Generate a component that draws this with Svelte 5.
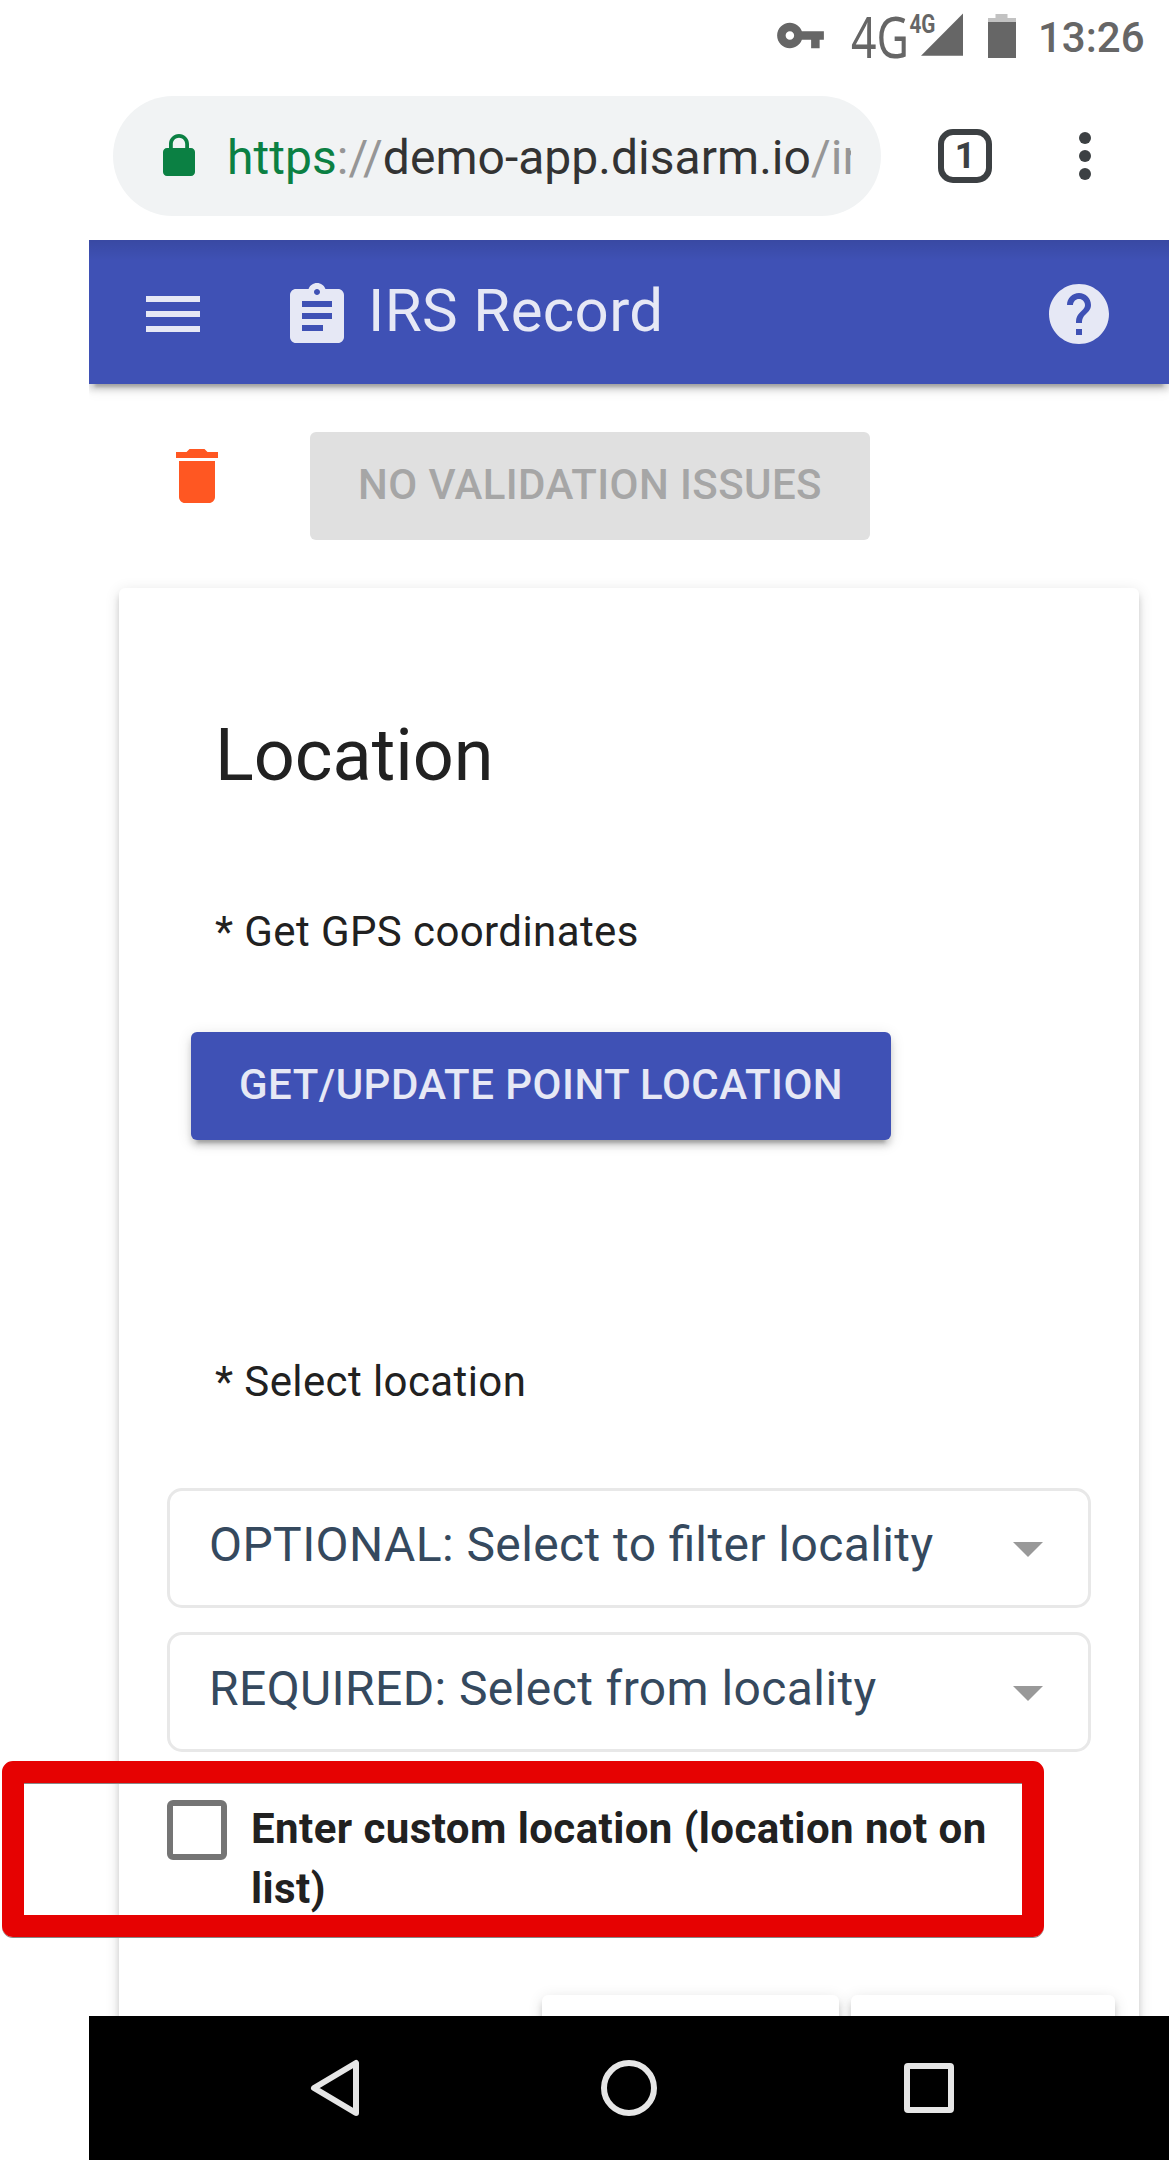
<script>
  const selects = [
    ['OPTIONAL: Select to ', 'fi', 'lter locality'],
    ['REQUIRED: Select from locality', '', '']
  ];
</script>

<div class="page">
  <div class="phone">
    <header class="status">
      <svg class="key" viewBox="0 0 24 24"><path d="M12.65 10C11.83 7.67 9.61 6 7 6c-3.31 0-6 2.69-6 6s2.69 6 6 6c2.61 0 4.83-1.67 5.65-4H17v4h4v-4h2v-4H12.65zM7 14c-1.1 0-2-.9-2-2s.9-2 2-2 2 .9 2 2-.9 2-2 2z" /></svg>
      <svg class="signal" viewBox="0 0 112 48">
        <text class="net" x="0" y="44.5" textLength="58" lengthAdjust="spacingAndGlyphs">4G</text>
        <text class="net-small" x="58.4" y="19.5" textLength="26" lengthAdjust="spacingAndGlyphs">4G</text>
        <path d="M70 42.7L112 .5v42.2z" />
      </svg>
      <svg class="battery" viewBox="0 0 28 44">
        <path class="empty" d="M7.5 0h12v4H28v4H0V4h7.5z" />
        <path d="M0 8h28v36H0z" />
      </svg>
      <span class="time">13:26</span>
    </header>

    <div class="browser">
      <div class="omnibox">
        <svg class="lock" viewBox="0 0 24 24"><path d="M18 8h-1V6c0-2.76-2.24-5-5-5S7 3.24 7 6v2H6c-1.1 0-2 .9-2 2v10c0 1.1.9 2 2 2h12c1.1 0 2-.9 2-2V10c0-1.1-.9-2-2-2zm-2.9 0H8.9V6c0-1.71 1.39-3.1 3.1-3.1 1.71 0 3.1 1.39 3.1 3.1v2z" /></svg>
        <div class="url"><span class="secure">https</span><span class="dim">://</span>demo-app.disarm.io<span class="dim">/irs</span></div>
      </div>
      <div class="tabs">1</div>
      <svg class="dots" viewBox="0 0 12 48"><circle cx="6" cy="6" r="6" /><circle cx="6" cy="24" r="6" /><circle cx="6" cy="42" r="6" /></svg>
    </div>

    <div class="appbar">
      <svg class="icon menu" viewBox="0 0 24 24"><path d="M3 18h18v-2H3v2zm0-5h18v-2H3v2zm0-7v2h18V6H3z" /></svg>
      <svg class="icon clip" viewBox="0 0 24 24"><path d="M19 3h-4.18C14.4 1.84 13.3 1 12 1c-1.3 0-2.4.84-2.82 2H5c-1.1 0-2 .9-2 2v14c0 1.1.9 2 2 2h14c1.1 0 2-.9 2-2V5c0-1.1-.9-2-2-2zm-7 0c.55 0 1 .45 1 1s-.45 1-1 1-1-.45-1-1 .45-1 1-1zm2 14H7v-2h7v2zm3-4H7v-2h10v2zm0-4H7V7h10v2z" /></svg>
      <h1>IRS Record</h1>
      <svg class="icon help" viewBox="0 0 24 24"><path d="M12 2C6.48 2 2 6.48 2 12s4.48 10 10 10 10-4.48 10-10S17.52 2 12 2zm1 17h-2v-2h2v2zm2.07-7.75l-.9.92C13.45 12.9 13 13.5 13 15h-2v-.5c0-1.1.45-2.1 1.17-2.83l1.24-1.26c.37-.36.59-.86.59-1.41 0-1.1-.9-2-2-2s-2 .9-2 2H8c0-2.21 1.79-4 4-4s4 1.79 4 4c0 .88-.36 1.68-.93 2.25z" /></svg>
    </div>

    <main>
      <div class="actions">
        <svg class="trash" viewBox="0 0 24 24"><path d="M6 19c0 1.1.9 2 2 2h8c1.1 0 2-.9 2-2V7H6v12zM19 4h-3.5l-1-1h-5l-1 1H5v2h14V4z" /></svg>
        <button class="btn" disabled>NO VALIDATION ISSUES</button>
      </div>
      <section class="card">
        <h2>Location</h2>
        <p class="label gps">* Get GPS coordinates</p>
        <button class="btn primary">GET/UPDATE POINT LOCATION</button>
        <p class="label pick">* Select location</p>
        <div class="selects">
          {#each selects as [start, ligature, end]}
            <div class="select"><span class="value">{start}<span class="lig">{ligature}</span>{end}</span><i class="caret"></i></div>
          {/each}
        </div>
        <div class="custom">
          <div class="highlight"></div>
          <span class="box"></span>
          <span class="custom-label">Enter custom location (location not on list)</span>
        </div>
        <div class="footer"><div class="stub wide"></div><div class="stub"></div></div>
      </section>
    </main>

    <nav>
      <svg viewBox="0 0 60 60"><path d="M15 30L57 5V55z" /></svg>
      <svg viewBox="0 0 60 60"><circle cx="30" cy="30" r="25" /></svg>
      <svg viewBox="0 0 60 60"><rect x="8" y="8" width="44" height="44" rx="1" /></svg>
    </nav>
  </div>
</div>

<style>
  :global(body) { background: #fff; }
  .page {
    width: 1169px;
    height: 2160px;
    padding-left: 89px;
    box-sizing: border-box;
    overflow: hidden;
    background: #fff;
    font-family: Roboto, sans-serif;
    color: #212121;
  }
  .phone { width: 1080px; height: 2160px; display: flex; flex-direction: column; }
  svg { display: block; flex: none; }
  h1, h2, p { margin: 0; font-weight: 400; }

  .status { height: 72px; display: flex; align-items: flex-start; justify-content: flex-end; padding-right: 26px; box-sizing: border-box; fill: #666; color: #666; }
  .key { width: 51px; height: 51px; margin-top: 10px; }
  .signal { width: 112px; height: 48px; margin: 13px 0 0 25px; overflow: visible; }
  .net { font: 400 56px "Noto Sans", sans-serif; }
  .net-small { font: 700 26px Roboto, sans-serif; }
  .battery { width: 28px; height: 44px; margin: 14px 0 0 25px; }
  .empty { fill: #c2c2c2; }
  .time { width: 105px; margin-left: 22px; font-size: 42px; font-weight: 500; line-height: 48px; margin-top: 14px; white-space: nowrap; }

  .browser { height: 168px; display: flex; align-items: center; padding-left: 24px; box-sizing: border-box; }
  .omnibox { width: 768px; height: 120px; border-radius: 60px; background: #f1f3f4; display: flex; align-items: center; padding-left: 42px; box-sizing: border-box; }
  .lock { width: 48px; height: 48px; fill: #0b8043; }
  .url { width: 624px; margin-left: 24px; padding-top: 4px; overflow: hidden; white-space: nowrap; font-size: 48px; line-height: 60px; letter-spacing: .03px; color: #333; }
  .secure { color: #0b8043; }
  .dim { color: #969696; }
  .tabs { width: 54px; height: 54px; margin-left: 57px; box-sizing: border-box; border: 6px solid #3c4043; border-radius: 15px; font-size: 36px; font-weight: 700; line-height: 43px; text-align: center; color: #3c4043; }
  .dots { width: 12px; height: 48px; margin-left: 87px; fill: #3c4043; }

  .appbar {
    height: 144px;
    flex: none;
    display: flex;
    align-items: center;
    padding: 0 54px 0 48px;
    background: linear-gradient(rgba(0, 0, 0, .1), transparent 21px) #3f51b5;
    color: #e6e8f5;
    fill: #e6e8f5;
    box-shadow: 0 9px 3px -6px rgba(0, 0, 0, .2), 0 6px 6px rgba(0, 0, 0, .14), 0 3px 15px rgba(0, 0, 0, .12);
    clip-path: inset(0 0 -30px 0);
  }
  .icon { width: 72px; height: 72px; margin-top: 4px; }
  .icon.clip { margin: 8px 0 0 72px; }
  h1 { margin: -2px auto 0 15px; font-size: 60px; line-height: 72px; letter-spacing: .375px; }

  main { height: 1632px; flex: none; overflow: visible; clip-path: inset(0 0 0 -100px); padding: 0 30px; box-sizing: border-box; }
  .actions { height: 204px; padding: 48px 0 0 42px; display: flex; align-items: flex-start; box-sizing: border-box; }
  .trash { width: 72px; height: 72px; margin: 8px 77px 0 0; fill: #ff5722; }
  .btn { display: block; height: 108px; padding: 0 48px 2px; border: 0; border-radius: 6px; font: 500 42px/106px Roboto, sans-serif; letter-spacing: .42px; background: #e0e0e0; color: #a6a6a6; white-space: nowrap; }
  .btn.primary { letter-spacing: .48px; background: #3f51b5; color: #e6e8f5; margin-left: 24px; box-shadow: 0 9px 3px -6px rgba(0, 0, 0, .2), 0 6px 6px rgba(0, 0, 0, .14), 0 3px 15px rgba(0, 0, 0, .12); }

  .card { height: 1600px; padding: 120px 48px 0; box-sizing: border-box; border-radius: 6px; background: #fff; box-shadow: 0 9px 3px -6px rgba(0, 0, 0, .2), 0 6px 6px rgba(0, 0, 0, .14), 0 3px 15px rgba(0, 0, 0, .12); }
  h2 { padding-left: 48px; font-size: 72px; line-height: 96px; }
  .label { padding-left: 48px; font-size: 42px; line-height: 60px; letter-spacing: .4px; }
  .gps { margin: 98px 0 70px; }
  .pick { margin: 212px 0 76px; }
  .selects { display: flex; flex-direction: column; gap: 24px; }
  .select { height: 120px; box-sizing: border-box; border: 3px solid #e8e8e8; border-radius: 15px; display: flex; align-items: center; justify-content: space-between; padding: 0 45px 6px 39px; font-size: 48px; line-height: 60px; letter-spacing: .4px; color: #35495e; }
  .value { white-space: pre; }
  .lig { letter-spacing: 0; }
  .caret { margin-top: 9px; border: 15px solid transparent; border-top-color: #999; border-bottom: 0; }

  .custom { position: relative; margin-top: 48px; display: flex; height: 120px; }
  .box { width: 60px; height: 60px; box-sizing: border-box; border: 6px solid #757575; border-radius: 6px; flex: none; }
  .custom-label { width: 780px; margin: -1px 0 0 24px; font-size: 42px; line-height: 60px; font-weight: 700; letter-spacing: .43px; }
  .highlight { position: absolute; left: -165px; top: -39px; width: 1042px; height: 176px; box-sizing: border-box; border: 22px solid #e60202; border-radius: 11px; box-shadow: inset 0 1px 0 #888, 0 1px 0 #888; }
  .footer { display: flex; gap: 12px; justify-content: flex-end; margin: 75px -24px 0 0; }
  .stub { width: 264px; height: 108px; border-radius: 6px; background: #fff; box-shadow: 0 9px 3px -6px rgba(0, 0, 0, .2), 0 6px 6px rgba(0, 0, 0, .14), 0 3px 15px rgba(0, 0, 0, .12); }
  .stub.wide { width: 297px; }

  nav { height: 144px; flex: none; background: #000; display: flex; align-items: center; gap: 240px; padding-left: 210px; box-sizing: border-box; }
  nav svg { width: 60px; height: 60px; fill: none; stroke: #e6e6e6; stroke-width: 6; stroke-linejoin: round; }
</style>
